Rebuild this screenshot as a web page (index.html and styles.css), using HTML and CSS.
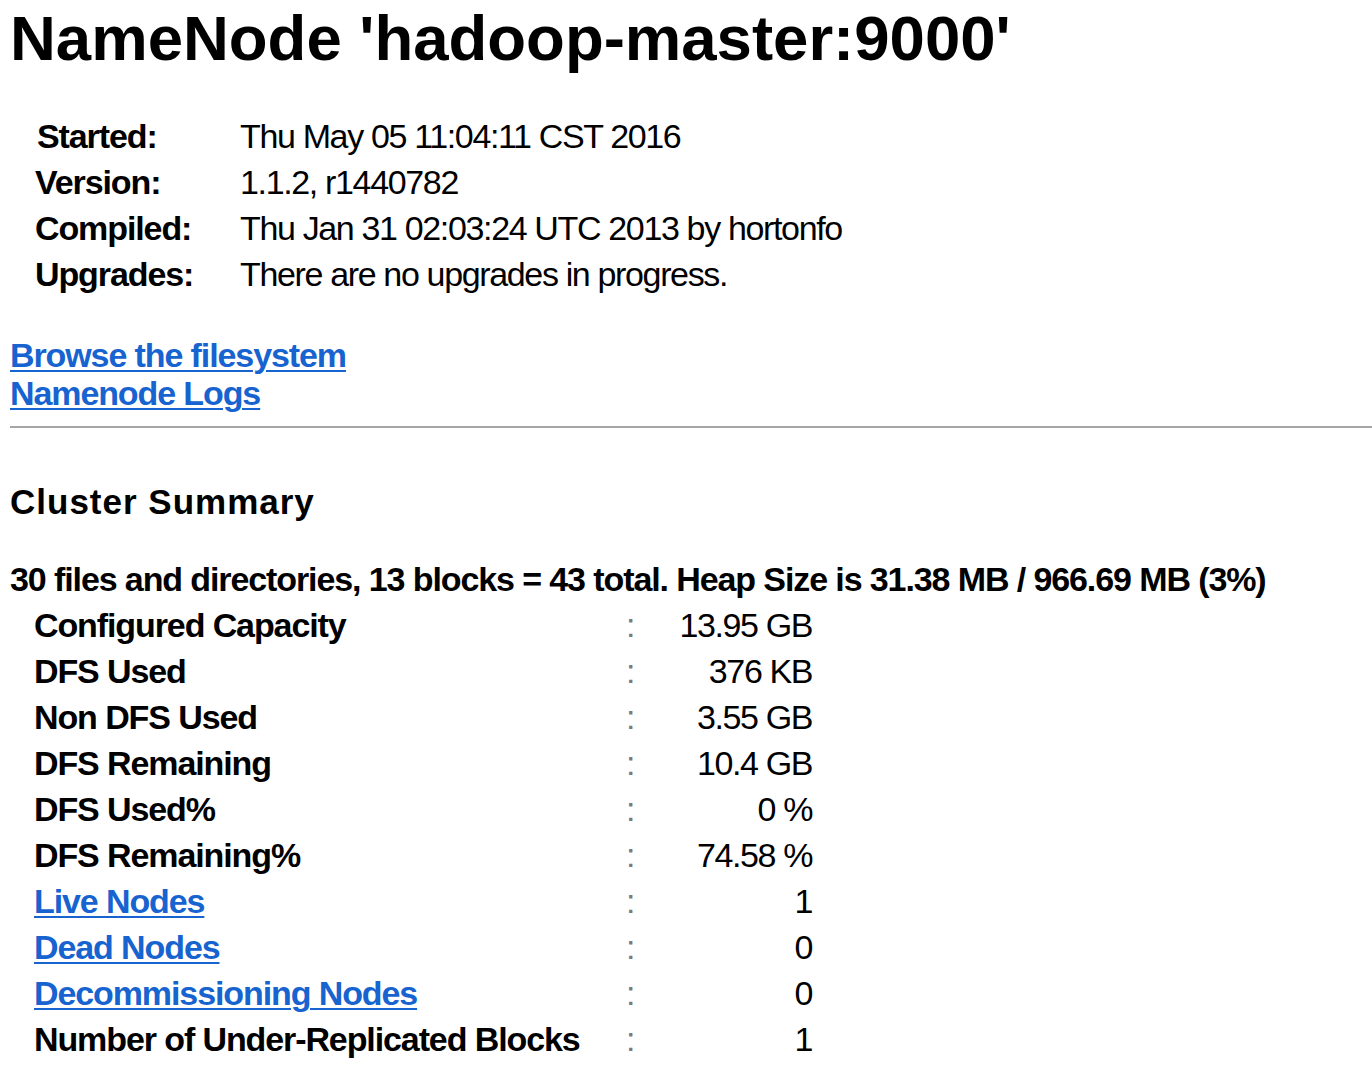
FILE: index.html
```html
<!DOCTYPE html>
<html>
<head>
<meta charset="utf-8">
<title>Hadoop NameNode hadoop-master:9000</title>
<link rel="stylesheet" href="styles.css">
</head>
<body>
<h1 class="title">NameNode 'hadoop-master:9000'</h1>
<div class="info">
  <div class="info-label info-label-started">Started:</div><div class="info-value">Thu May 05 11:04:11 CST 2016</div>
  <div class="info-label">Version:</div><div class="info-value">1.1.2, r1440782</div>
  <div class="info-label">Compiled:</div><div class="info-value">Thu Jan 31 02:03:24 UTC 2013 by hortonfo</div>
  <div class="info-label">Upgrades:</div><div class="info-value">There are no upgrades in progress.</div>
</div>
<div class="links">
  <a class="link" href="#">Browse the filesystem</a>
  <a class="link" href="#">Namenode Logs</a>
</div>
<hr class="rule">
<h2 class="section">Cluster Summary</h2>
<div class="summary">30 files and directories, 13 blocks = 43 total. Heap Size is 31.38 MB / 966.69 MB (3%)</div>
<div class="stats">
  <div class="stat-label">Configured Capacity</div><div class="stat-colon">:</div><div class="stat-value">13.95 GB</div>
  <div class="stat-label">DFS Used</div><div class="stat-colon">:</div><div class="stat-value">376 KB</div>
  <div class="stat-label">Non DFS Used</div><div class="stat-colon">:</div><div class="stat-value">3.55 GB</div>
  <div class="stat-label">DFS Remaining</div><div class="stat-colon">:</div><div class="stat-value">10.4 GB</div>
  <div class="stat-label">DFS Used%</div><div class="stat-colon">:</div><div class="stat-value">0 %</div>
  <div class="stat-label">DFS Remaining%</div><div class="stat-colon">:</div><div class="stat-value">74.58 %</div>
  <div class="stat-label"><a class="link" href="#">Live Nodes</a></div><div class="stat-colon">:</div><div class="stat-value">1</div>
  <div class="stat-label"><a class="link" href="#">Dead Nodes</a></div><div class="stat-colon">:</div><div class="stat-value">0</div>
  <div class="stat-label"><a class="link" href="#">Decommissioning Nodes</a></div><div class="stat-colon">:</div><div class="stat-value">0</div>
  <div class="stat-label">Number of Under-Replicated Blocks</div><div class="stat-colon">:</div><div class="stat-value">1</div>
</div>
</body>
</html>
```
FILE: styles.css
```css
html, body {
  background: #ffffff;
}
body {
  margin: 8px 0 0 10px;
  font-family: "Liberation Sans", Arial, sans-serif;
  color: #000000;
  font-size: 34px;
}
.title {
  margin: 0;
  font-size: 63.5px;
  line-height: 60px;
  font-weight: bold;
}
.info {
  margin-top: 45px;
  padding-left: 25px;
  display: grid;
  grid-template-columns: 205px auto;
  grid-auto-rows: 46px;
  line-height: 46px;
}
.info-label {
  font-weight: bold;
  letter-spacing: -1.1px;
}
.info-label-started {
  padding-left: 2px;
}
.info-value {
  letter-spacing: -1.35px;
}
.links {
  margin-top: 39px;
  display: flex;
  flex-direction: column;
  align-items: flex-start;
  line-height: 38px;
}
.link {
  color: #1763d0;
  font-weight: bold;
  letter-spacing: -1.1px;
  text-decoration: underline;
  text-decoration-thickness: 2px;
  text-underline-offset: 3px;
}
.rule {
  margin: 14px 0 0 0;
  border: 0;
  border-top: 2px solid #a6a6a6;
  height: 0;
}
.section {
  margin: 54px 0 0 0;
  font-size: 35px;
  line-height: 40px;
  font-weight: bold;
  letter-spacing: 1px;
}
.summary {
  margin-top: 34px;
  line-height: 46px;
  font-weight: bold;
  letter-spacing: -1.1px;
  white-space: nowrap;
}
.stats {
  padding-left: 24px;
  display: grid;
  grid-template-columns: 592px 40px 146px;
  grid-auto-rows: 46px;
  line-height: 46px;
}
.stat-label {
  font-weight: bold;
  letter-spacing: -1.1px;
  white-space: nowrap;
}
.stat-colon {
  color: #7a7a7a;
}
.stat-value {
  text-align: right;
  letter-spacing: -1.4px;
}
```
